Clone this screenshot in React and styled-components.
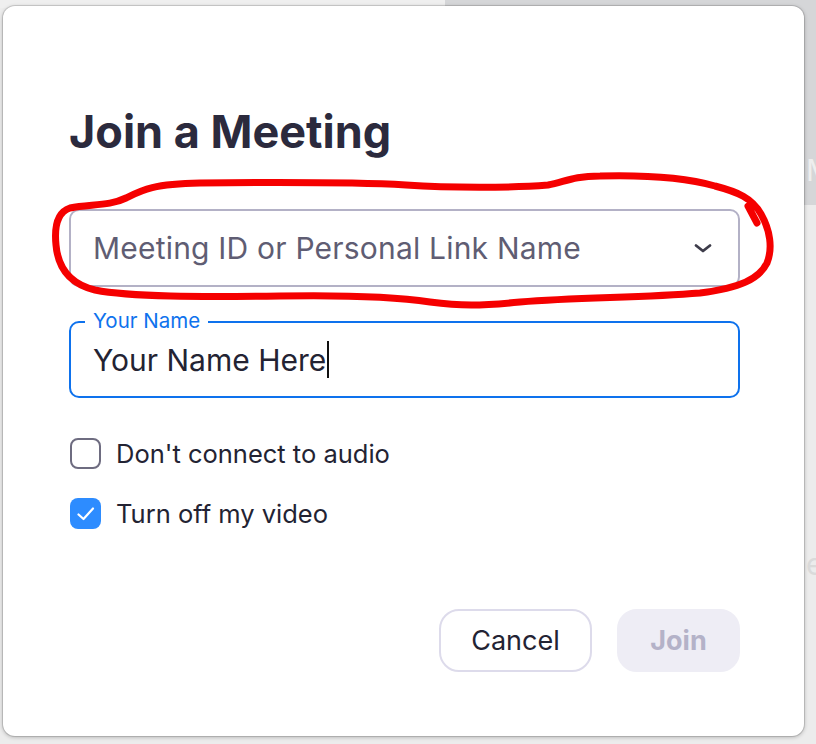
import React, { useState } from 'react';
import styled, { createGlobalStyle } from 'styled-components';

const GlobalStyle = createGlobalStyle`
  html, body {
    margin: 0;
    padding: 0;
    background: #ececec;
  }
  * {
    box-sizing: border-box;
  }
`;

const Page = styled.div`
  position: relative;
  width: 816px;
  height: 744px;
  padding: 6px 12px 8px 3px;
  display: flex;
  overflow: hidden;
  font-family: Inter, "Liberation Sans", sans-serif;
  background:
    linear-gradient(#d5d6d8, #d5d6d8) right top / 371px 205px no-repeat,
    linear-gradient(#efefef, #efefef) left top / 445px 8px no-repeat,
    #ececec;
`;

// faded text of the app window behind the dialog
const BackdropText = styled.span`
  position: absolute;
  left: ${(p) => p.x}px;
  top: ${(p) => p.y}px;
  font-size: 30px;
  color: ${(p) => p.color};
`;

const Dialog = styled.div`
  position: relative;
  flex: 1;
  background: #fff;
  border-radius: 12px;
  box-shadow: 0 0 0 1px rgba(0, 0, 0, 0.12), 0 1px 4px rgba(0, 0, 0, 0.28);
  padding: 99px 64px 0 66px;
  display: flex;
  flex-direction: column;
`;

const Title = styled.h1`
  margin: 0;
  font-size: 45px;
  line-height: 54px;
  font-weight: 700;
  color: #2b2a3d;
`;

const Select = styled.div`
  margin-top: 50px;
  height: 78px;
  border: 2px solid #b3b1c6;
  border-radius: 10px;
  padding: 0 26px 0 22px;
  display: flex;
  align-items: center;
  justify-content: space-between;
`;

const Placeholder = styled.span`
  font-size: 30px;
  line-height: 36px;
  letter-spacing: 0.2px;
  color: #5f5d73;
`;

const Field = styled.div`
  position: relative;
  margin-top: 34px;
  height: 77px;
  border: 2px solid #0e72ed;
  border-radius: 10px;
  padding: 0 22px;
  display: flex;
  align-items: center;
`;

const FieldLabel = styled.span`
  position: absolute;
  left: 14px;
  top: -14px;
  padding: 0 8px;
  background: #fff;
  font-size: 20.5px;
  line-height: 24px;
  color: #0e72ed;
`;

const FieldValue = styled.span`
  font-size: 30px;
  line-height: 36px;
  color: #232333;
`;

const Caret = styled.span`
  display: inline-block;
  width: 2px;
  height: 37px;
  margin-left: 1px;
  vertical-align: -7px;
  background: #111;
`;

const Options = styled.div`
  margin-top: 40px;
  display: flex;
  flex-direction: column;
  gap: 29px;
`;

const Option = styled.label`
  display: flex;
  align-items: center;
  gap: 15px;
  padding-left: 1px;
  font-size: 25.5px;
  line-height: 31px;
  color: #232333;
  cursor: pointer;
`;

const Box = styled.span`
  width: 31px;
  height: 31px;
  border-radius: 8px;
  display: flex;
  align-items: center;
  justify-content: center;
  border: ${(p) => (p.checked ? 'none' : '2px solid #6e6c80')};
  background: ${(p) => (p.checked ? '#2d8cff' : '#fff')};
`;

const Actions = styled.div`
  margin-top: 80px;
  display: flex;
  justify-content: flex-end;
  gap: 25px;
`;

const Button = styled.button`
  height: 63px;
  border-radius: 20px;
  font-family: inherit;
  font-size: 27px;
  padding: 0;
  width: ${(p) => (p.primary ? '123px' : '153px')};
  font-weight: ${(p) => (p.primary ? 700 : 400)};
  color: ${(p) => (p.primary ? '#b4b2c8' : '#232333')};
  background: ${(p) => (p.primary ? '#eeedf5' : '#fff')};
  border: 2px solid ${(p) => (p.primary ? '#eeedf5' : '#dddbeb')};
`;

// hand-drawn red loop over the dropdown
const Scribble = styled.svg`
  position: absolute;
  left: 0;
  top: 0;
  pointer-events: none;
`;

const Chevron = () => (
  <svg width="18" height="10" viewBox="0 0 18 10">
    <path d="M2 2.5 L9 8 L16 2.5" fill="none" stroke="#3d3c4a" strokeWidth="2.8" strokeLinecap="round" strokeLinejoin="round" />
  </svg>
);

const Check = () => (
  <svg width="20" height="16" viewBox="0 0 20 16">
    <path d="M2.5 8.5 L7.5 13 L17 2.5" fill="none" stroke="#fff" strokeWidth="2.2" strokeLinecap="round" strokeLinejoin="round" />
  </svg>
);

const App = () => {
  const [noAudio, setNoAudio] = useState(false);
  const [noVideo, setNoVideo] = useState(true);

  return (
    <Page>
      <GlobalStyle />
      <BackdropText x={806} y={152} color="#eeeeee">Ma</BackdropText>
      <BackdropText x={806} y={546} color="#dadada">ee</BackdropText>
      <Dialog>
        <Title>Join a Meeting</Title>

        <Select>
          <Placeholder>Meeting ID or Personal Link Name</Placeholder>
          <Chevron />
        </Select>

        <Field>
          <FieldLabel>Your Name</FieldLabel>
          <FieldValue>
            Your Name Here<Caret />
          </FieldValue>
        </Field>

        <Options>
          <Option onClick={() => setNoAudio(!noAudio)}>
            <Box checked={noAudio}>{noAudio && <Check />}</Box>
            Don't connect to audio
          </Option>
          <Option onClick={() => setNoVideo(!noVideo)}>
            <Box checked={noVideo}>{noVideo && <Check />}</Box>
            Turn off my video
          </Option>
        </Options>

        <Actions>
          <Button>Cancel</Button>
          <Button primary>Join</Button>
        </Actions>
      </Dialog>

      <Scribble width="816" height="744" viewBox="0 0 816 744">
        <path
          d="M70 208 C90 204 110 206 126 198 C142 190 152 184 200 183 C300 182 370 183 406 185 C450 188 510 188 548 185 C565 182 572 176 600 176 C640 175 680 176 715 186 C738 192 752 198 761 214 C770 230 773 248 767 263 C759 279 740 288 700 293 C640 298 580 297 520 302 C480 306 460 306 430 302 C390 296 340 295 280 296 C200 297 130 297 95 290 C70 284 58 268 56 245 C54 225 58 212 70 208 Z M748 206 L757 223"
          fill="none"
          stroke="#f50000"
          strokeWidth="7"
          strokeLinecap="round"
          strokeLinejoin="round"
        />
      </Scribble>
    </Page>
  );
};

export default App;
